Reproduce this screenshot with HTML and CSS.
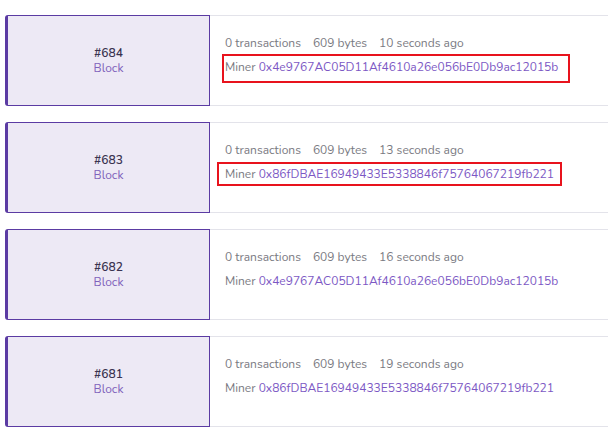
FILE: index.html
```html
<!DOCTYPE html>
<html>
<head>
<meta charset="utf-8">
<link rel="stylesheet" href="styles.css">
</head>
<body>
<div class="list">
  <div class="row">
    <div class="block"><span class="num">#684</span><span class="lbl">Block</span></div>
    <div class="info">
      <div class="meta"><span>0 transactions</span><span>609 bytes</span><span>10 seconds ago</span></div>
      <div class="miner">Miner <a class="addr">0x4e9767AC05D11Af4610a26e056bE0Db9ac12015b</a></div>
      <div class="mark mark1"></div>
    </div>
  </div>
  <div class="row">
    <div class="block"><span class="num">#683</span><span class="lbl">Block</span></div>
    <div class="info">
      <div class="meta"><span>0 transactions</span><span>609 bytes</span><span>13 seconds ago</span></div>
      <div class="miner">Miner <a class="addr">0x86fDBAE16949433E5338846f75764067219fb221</a></div>
      <div class="mark mark2"></div>
    </div>
  </div>
  <div class="row">
    <div class="block"><span class="num">#682</span><span class="lbl">Block</span></div>
    <div class="info">
      <div class="meta"><span>0 transactions</span><span>609 bytes</span><span>16 seconds ago</span></div>
      <div class="miner">Miner <a class="addr">0x4e9767AC05D11Af4610a26e056bE0Db9ac12015b</a></div>
    </div>
  </div>
  <div class="row">
    <div class="block"><span class="num">#681</span><span class="lbl">Block</span></div>
    <div class="info">
      <div class="meta"><span>0 transactions</span><span>609 bytes</span><span>19 seconds ago</span></div>
      <div class="miner">Miner <a class="addr">0x86fDBAE16949433E5338846f75764067219fb221</a></div>
    </div>
  </div>
</div>
</body>
</html>
```
FILE: styles.css
```css
html, body {
  margin: 0;
  padding: 0;
  background: #ffffff;
}
body {
  font-family: "Nunito", "Lato", "Open Sans", sans-serif;
  font-size: 12px;
}
.list {
  padding: 15px 0 0 5px;
  display: flex;
  flex-direction: column;
  gap: 16px;
}
.row {
  display: flex;
  height: 91px;
}
.block {
  box-sizing: border-box;
  width: 205px;
  flex: none;
  background: #ede9f5;
  border: 1px solid #5b3ba3;
  border-left: 3px solid #5b3ba3;
  border-radius: 3px 0 0 3px;
  display: flex;
  flex-direction: column;
  align-items: center;
  justify-content: center;
  line-height: 15px;
  padding-top: 1px;
}
.num {
  color: #3a3350;
  font-weight: 600;
}
.lbl {
  color: #7f62bb;
}
.info {
  position: relative;
  flex: 1;
  box-sizing: border-box;
  border-top: 1px solid #e3e3ea;
  border-bottom: 1px solid #e3e3ea;
  padding: 19px 0 0 15px;
  display: flex;
  flex-direction: column;
  gap: 8px;
  line-height: 16px;
  color: #7a7a82;
}
.meta {
  display: flex;
  gap: 12px;
}
.addr {
  color: #7c58c4;
}
.mark {
  position: absolute;
  border: 2px solid #e8131d;
  box-sizing: border-box;
}
.mark1 {
  left: 12px;
  top: 38px;
  width: 348px;
  height: 29px;
}
.mark2 {
  left: 7px;
  top: 39px;
  width: 345px;
  height: 24px;
}
```
